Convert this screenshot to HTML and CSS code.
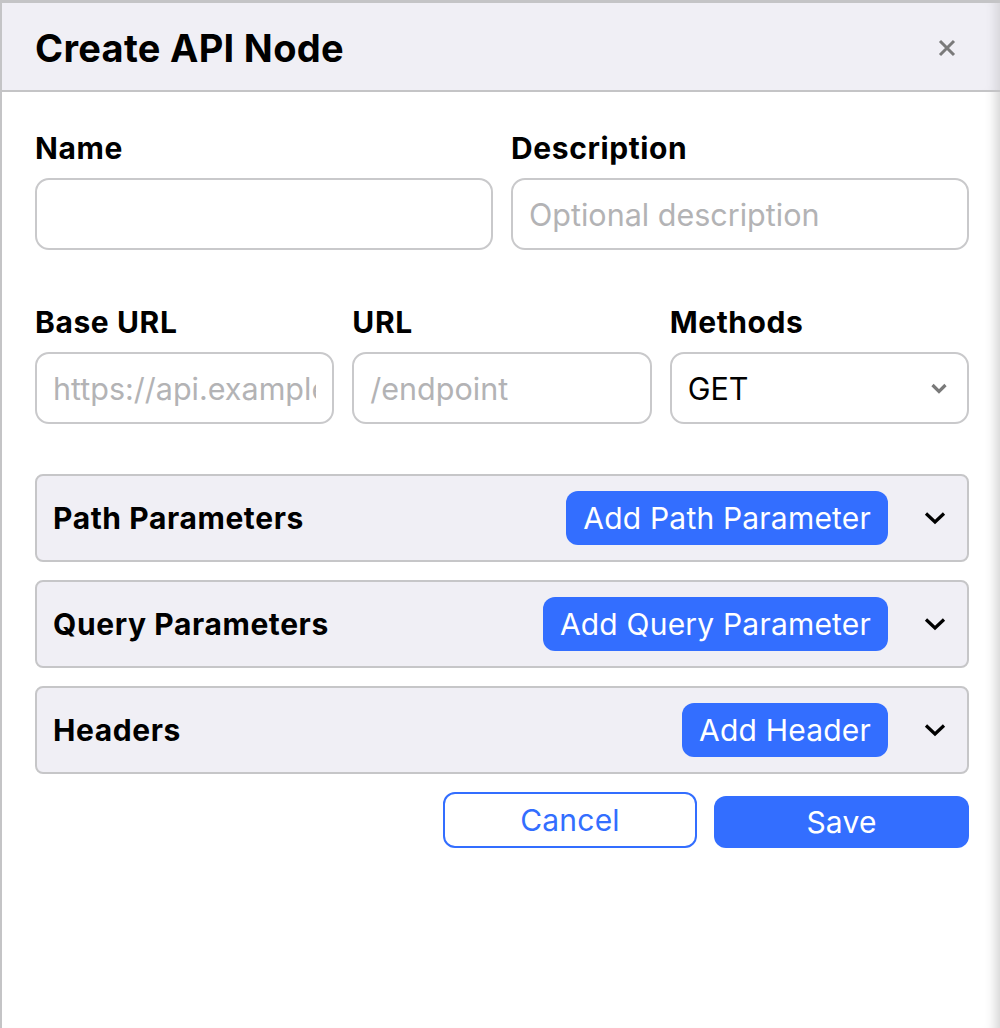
FILE: index.html
```html
<!DOCTYPE html>
<html>
<head>
<meta charset="utf-8">
<link rel="stylesheet" href="styles.css">
</head>
<body>
<div class="modal">
  <div class="modal-header">
    <h1 class="title">Create API Node</h1>
    <button class="close" aria-label="Close">
      <svg width="18" height="18" viewBox="0 0 18 18"><path d="M2 2 L16 16 M16 2 L2 16" stroke="#7a7a7a" stroke-width="3" stroke-linecap="butt"/></svg>
    </button>
  </div>
  <div class="modal-body">
    <div class="row two">
      <div class="field">
        <label class="label">Name</label>
        <input class="input" type="text">
      </div>
      <div class="field">
        <label class="label">Description</label>
        <input class="input" type="text" placeholder="Optional description">
      </div>
    </div>
    <div class="row three">
      <div class="field">
        <label class="label">Base URL</label>
        <input class="input" type="text" placeholder="https://api.example.com">
      </div>
      <div class="field">
        <label class="label">URL</label>
        <input class="input" type="text" placeholder="/endpoint">
      </div>
      <div class="field">
        <label class="label">Methods</label>
        <div class="input select">
          <span>GET</span>
          <svg width="16" height="11" viewBox="0 0 16 11"><path d="M1.5 2 L8 8.5 L14.5 2" fill="none" stroke="#7a7a7a" stroke-width="3.2"/></svg>
        </div>
      </div>
    </div>
    <div class="sections">
      <div class="section">
        <span class="section-title">Path Parameters</span>
        <button class="btn-add">Add Path Parameter</button>
        <svg class="chev" width="22" height="14" viewBox="0 0 22 14"><path d="M2 2.5 L11 11 L20 2.5" fill="none" stroke="#000" stroke-width="3.2"/></svg>
      </div>
      <div class="section">
        <span class="section-title">Query Parameters</span>
        <button class="btn-add">Add Query Parameter</button>
        <svg class="chev" width="22" height="14" viewBox="0 0 22 14"><path d="M2 2.5 L11 11 L20 2.5" fill="none" stroke="#000" stroke-width="3.2"/></svg>
      </div>
      <div class="section">
        <span class="section-title">Headers</span>
        <button class="btn-add">Add Header</button>
        <svg class="chev" width="22" height="14" viewBox="0 0 22 14"><path d="M2 2.5 L11 11 L20 2.5" fill="none" stroke="#000" stroke-width="3.2"/></svg>
      </div>
    </div>
    <div class="footer">
      <button class="btn-cancel">Cancel</button>
      <button class="btn-save">Save</button>
    </div>
  </div>
</div>
</body>
</html>
```

FILE: styles.css
```css
* { box-sizing: border-box; }
html, body {
  margin: 0;
  padding: 0;
  background: #ffffff;
  font-family: Inter, "Noto Sans", sans-serif;
  overflow: hidden;
}
.modal {
  width: 1000px;
  height: 1028px;
  border-top: 3px solid #c4c4c6;
  border-left: 2px solid #c4c4c6;
  background: #fff;
  box-shadow: inset -14px 0 12px -10px rgba(0,0,0,0.18);
}
.modal-header {
  height: 89px;
  background: #f0eff5;
  border-bottom: 2px solid #c4c4c6;
  display: flex;
  align-items: center;
  justify-content: space-between;
  padding: 0 44px 0 33px;
  box-shadow: inset -14px 0 12px -10px rgba(0,0,0,0.12);
}
.title {
  margin: 0;
  font-size: 38px;
  font-weight: 700;
  color: #000;
  letter-spacing: 0.3px;
  padding-top: 2px;
}
.close {
  border: none;
  background: transparent;
  padding: 0;
  display: flex;
  margin-top: 2px;
}
.modal-body {
  padding: 39px 31px 0 33px;
}
.row {
  display: grid;
  gap: 18px;
}
.row.two { grid-template-columns: 1fr 1fr; }
.row.three { grid-template-columns: 1fr 1fr 1fr; margin-top: 55px; }
.field {
  display: flex;
  flex-direction: column;
  min-width: 0;
}
.label {
  font-size: 30px;
  font-weight: 700;
  letter-spacing: 0.6px;
  color: #000;
  line-height: 34px;
  margin-bottom: 13px;
}
.input {
  height: 72px;
  width: 100%;
  border: 2px solid #c9c9cb;
  border-radius: 14px;
  padding: 0 16px;
  font-family: Inter, "Noto Sans", sans-serif;
  font-size: 30.5px;
  color: #000;
  background: #fff;
  outline: none;
}
.input::placeholder { color: #b3b3b5; }
.select {
  display: flex;
  align-items: center;
  justify-content: space-between;
  padding-right: 20px;
}
.sections {
  margin-top: 50px;
  display: flex;
  flex-direction: column;
  gap: 18px;
}
.section {
  height: 88px;
  background: #f0eff5;
  border: 2px solid #c6c6c8;
  border-radius: 8px;
  display: flex;
  align-items: center;
  padding: 0 21px 0 16px;
}
.section-title {
  font-size: 30px;
  font-weight: 700;
  letter-spacing: 0.6px;
  color: #000;
  flex: 1;
}
.btn-add {
  height: 54px;
  background: #336eff;
  color: #fff;
  border: none;
  border-radius: 12px;
  padding: 0 17px;
  font-family: Inter, "Noto Sans", sans-serif;
  font-size: 30px;
  letter-spacing: 0.2px;
  font-weight: 400;
}
.chev {
  margin-left: 36px;
}
.footer {
  margin-top: 18px;
  display: flex;
  justify-content: flex-end;
  align-items: flex-end;
  gap: 17px;
}
.btn-cancel {
  width: 254px;
  height: 56px;
  background: #fff;
  border: 2px solid #336eff;
  border-radius: 12px;
  color: #336eff;
  font-family: Inter, "Noto Sans", sans-serif;
  font-size: 30px;
  letter-spacing: 0.2px;
}
.btn-save {
  width: 255px;
  height: 52px;
  background: #336eff;
  border: none;
  border-radius: 12px;
  color: #fff;
  font-family: Inter, "Noto Sans", sans-serif;
  font-size: 30px;
  letter-spacing: 0.2px;
}
```
